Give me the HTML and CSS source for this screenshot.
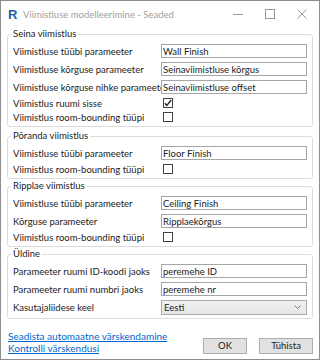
FILE: index.html
```html
<!DOCTYPE html>
<html>
<head>
  <title>Viimistluse modelleerimine - Seaded</title>
  <link rel="stylesheet" href="styles.css">
</head>
<body>
  <div class="window">
    <div class="titlebar">
      <span class="app-icon">R</span>
      <span class="title">Viimistluse modelleerimine - Seaded</span>
      <div class="controls">
        <span class="ctl"><svg width="10" height="10" viewBox="0 0 10 10"><path d="M0 5.5h10" stroke="#999" fill="none"/></svg></span>
        <span class="ctl"><svg width="10" height="10" viewBox="0 0 10 10"><rect x="0.5" y="0.5" width="9" height="9" stroke="#999" fill="none"/></svg></span>
        <span class="ctl"><svg width="10" height="10" viewBox="0 0 10 10"><path d="M0.5 0.5l9 9M9.5 0.5l-9 9" stroke="#999" fill="none"/></svg></span>
      </div>
    </div>

    <div class="content">
      <fieldset class="group first">
        <legend>Seina viimistlus</legend>
        <div class="row"><label>Viimistluse tüübi parameeter</label><input type="text" value="Wall Finish"></div>
        <div class="row"><label>Viimistluse kõrguse parameeter</label><input type="text" value="Seinaviimistluse kõrgus"></div>
        <div class="row"><label>Viimistluse kõrguse nihke parameeter</label><input type="text" value="Seinaviimistluse offset"></div>
        <div class="row check-row"><label>Viimistlus ruumi sisse</label><span class="check"><svg width="8" height="8" viewBox="0 0 8 8"><path d="M0.8 4.2l2 2.2 4.4-5.4" stroke="#222" stroke-width="1.3" fill="none"/></svg></span></div>
        <div class="row check-row"><label>Viimistlus room-bounding tüüpi</label><span class="check"></span></div>
      </fieldset>

      <fieldset class="group">
        <legend>Põranda viimistlus</legend>
        <div class="row"><label>Viimistluse tüübi parameeter</label><input type="text" value="Floor Finish"></div>
        <div class="row check-row"><label>Viimistlus room-bounding tüüpi</label><span class="check"></span></div>
      </fieldset>

      <fieldset class="group">
        <legend>Ripplae viimistlus</legend>
        <div class="row"><label>Viimistluse tüübi parameeter</label><input type="text" value="Ceiling Finish"></div>
        <div class="row"><label>Kõrguse parameeter</label><input type="text" value="Ripplaekõrgus"></div>
        <div class="row check-row"><label>Viimistlus room-bounding tüüpi</label><span class="check"></span></div>
      </fieldset>

      <fieldset class="group">
        <legend>Üldine</legend>
        <div class="row"><label>Parameeter ruumi ID-koodi jaoks</label><input type="text" value="peremehe ID"></div>
        <div class="row"><label>Parameeter ruumi numbri jaoks</label><input type="text" value="peremehe nr"></div>
        <div class="row"><label>Kasutajaliidese keel</label>
          <div class="select">
            <span>Eesti</span>
            <svg width="7" height="4" viewBox="0 0 7 4"><path d="M0.5 0.5l3 3 3-3" stroke="#777" fill="none"/></svg>
          </div>
        </div>
      </fieldset>

      <div class="footer">
        <div class="links">
          <a href="#">Seadista automaatne värskendamine</a>
          <a href="#">Kontrolli värskendusi</a>
        </div>
        <div class="buttons">
          <button class="ok">OK</button>
          <button class="cancel">Tühista</button>
        </div>
      </div>
    </div>
  </div>
</body>
</html>
```

FILE: styles.css
```css
body {
  margin: 0;
  font-family: Lato, "Noto Sans", sans-serif;
  font-size: 9.5px;
  color: #222;
}
.window {
  width: 320px;
  height: 360px;
  box-sizing: border-box;
  border: 1px solid #8e8e8e;
  background-color: #fff;
  display: flex;
  flex-direction: column;
}

/* Title bar */
.titlebar {
  height: 26px;
  display: flex;
  align-items: center;
  padding-left: 7px;
}
.app-icon {
  font-family: "Liberation Sans", sans-serif;
  font-weight: bold;
  font-size: 13px;
  color: #1f5fa8;
  width: 10px;
}
.title {
  margin-left: 5px;
  color: #a0a0a0;
  font-size: 9.5px;
}
.controls {
  margin-left: auto;
  display: flex;
  margin-right: 1px;
}
.ctl {
  width: 32px;
  height: 26px;
  display: flex;
  align-items: center;
  justify-content: center;
}

/* Content */
.content {
  flex: 1;
  padding: 1px 6px 0 6px;
  display: flex;
  flex-direction: column;
}
.group {
  margin: 0 0 1px 0;
  padding: 2px 5px 2px 5px;
  border: 1px solid #dcdcdc;
  border-radius: 3px;
}
.group.first {
  margin-bottom: 3px;
}
.group legend {
  padding: 0 2px;
  margin-left: -2px;
  line-height: 12px;
}
.row {
  display: grid;
  grid-template-columns: 148px 1fr;
  align-items: center;
  height: 18px;
}
.row label {
  white-space: nowrap;
}
.check-row {
  height: 14px;
}
input[type="text"] {
  height: 14px;
  box-sizing: border-box;
  width: 100%;
  margin: 0;
  padding: 0 1px;
  border: 1px solid #a6a6a6;
  font-family: Lato, "Noto Sans", sans-serif;
  font-size: 9.5px;
  color: #222;
  outline: none;
}
.check {
  width: 10px;
  height: 10px;
  box-sizing: border-box;
  margin-left: 2px;
  border: 1px solid #444;
  background-color: #fff;
  display: flex;
  align-items: center;
  justify-content: center;
}
.select {
  height: 15px;
  box-sizing: border-box;
  border: 1px solid #acacac;
  background: linear-gradient(#f2f2f2, #e5e5e5);
  display: flex;
  align-items: center;
  justify-content: space-between;
  padding: 0 5px 0 2px;
}

/* Footer */
.footer {
  flex: 1;
  display: flex;
  justify-content: space-between;
  align-items: flex-end;
  padding: 0 0 5px 1px;
}
.links {
  display: flex;
  flex-direction: column;
}
.links a {
  color: #0066cc;
  font-size: 10px;
  line-height: 12px;
}
.buttons {
  display: flex;
  gap: 12px;
}
button {
  height: 16px;
  box-sizing: border-box;
  border: 1px solid #adadad;
  background-color: #e1e1e1;
  font-family: Lato, "Noto Sans", sans-serif;
  font-size: 9.5px;
  color: #222;
  padding: 0;
  line-height: 14px;
}
.ok {
  width: 44px;
}
.cancel {
  width: 54px;
}
```
